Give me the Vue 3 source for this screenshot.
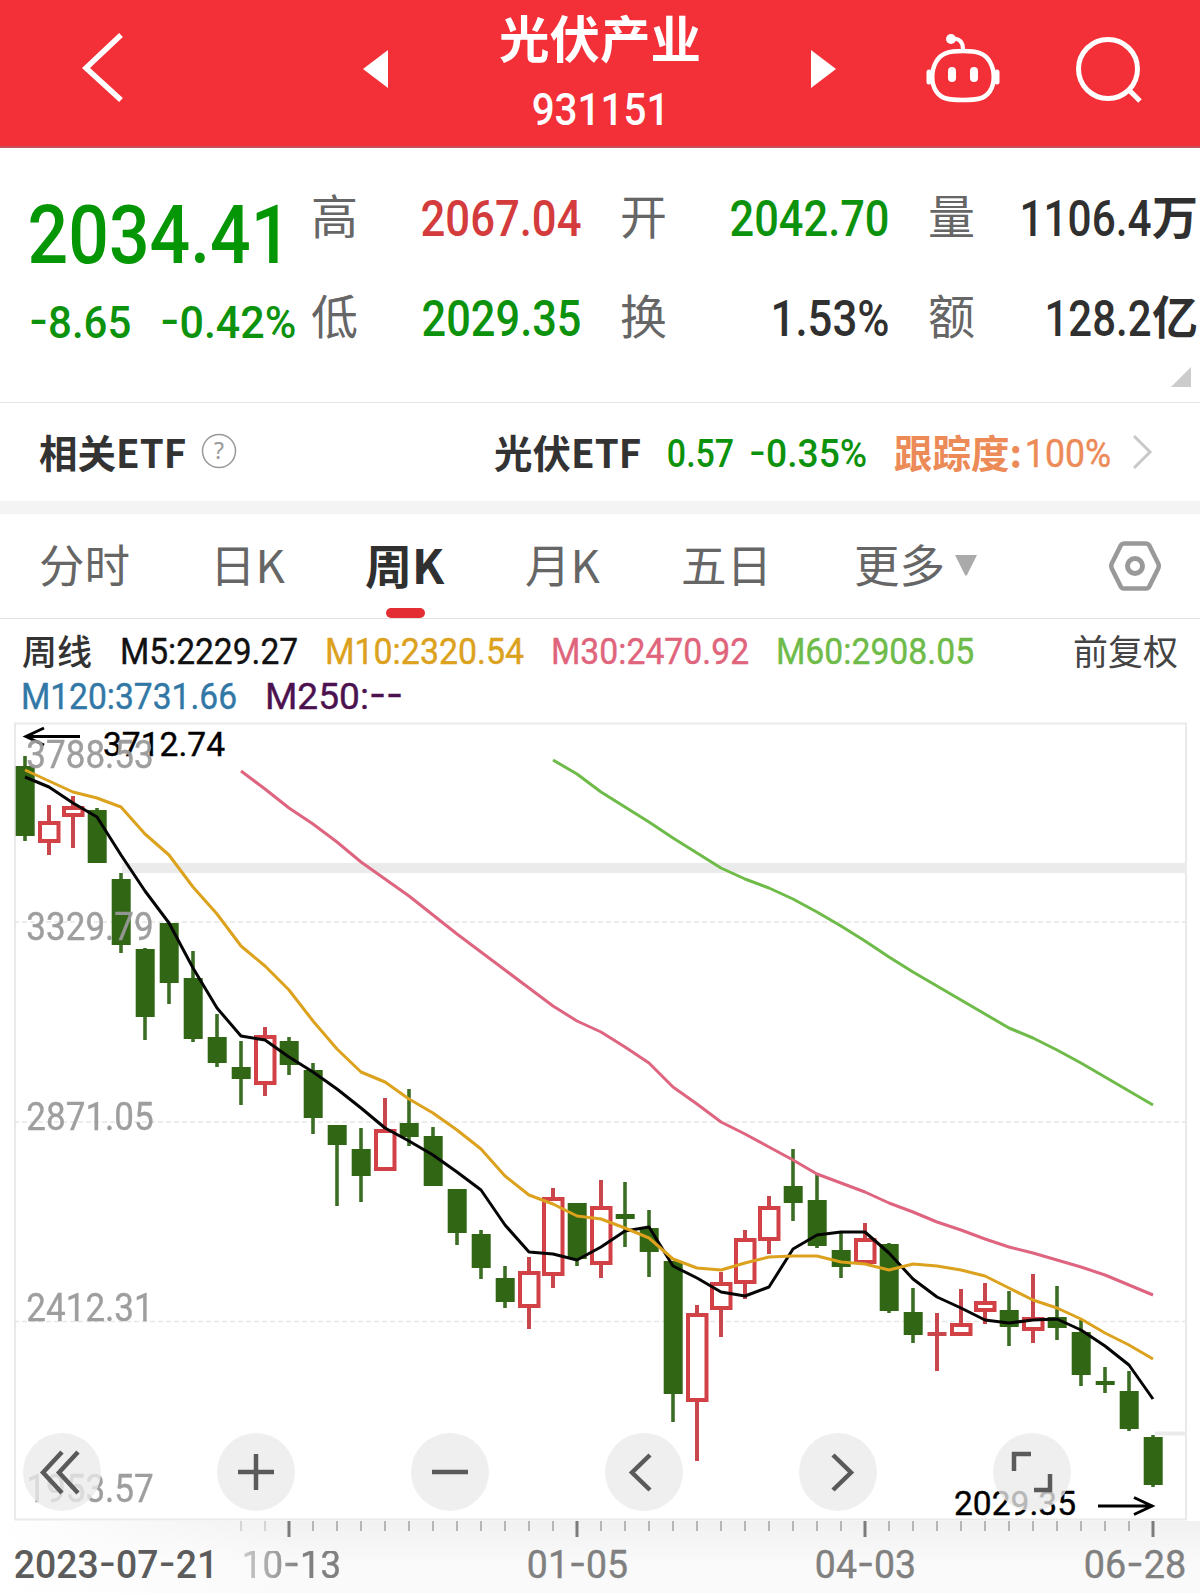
<template>
  <main class="page">
    <header class="top-bar">
      <svg class="back-icon" width="42" height="72" viewBox="0 0 42 72">
        <path d="M39 3 L4 36 L39 68" fill="none" stroke="#fff" stroke-width="5.500" />
      </svg>
      <svg class="prev-icon" width="26" height="38" viewBox="0 0 26 38">
        <path d="M25 0 V38 L0 19 Z" fill="#fff" />
      </svg>
      <div class="title-group">
        <h1 class="title">光伏产业</h1>
        <FitText text="931151" :w="135" :cap="32" class="code" />
      </div>
      <svg class="next-icon" width="26" height="38" viewBox="0 0 26 38">
        <path d="M0 0 V38 L25 19 Z" fill="#fff" />
      </svg>
      <svg class="robot-icon" width="78" height="72" viewBox="0 0 78 72">
        <g fill="none" stroke="#fff" stroke-width="4.500" stroke-linecap="round">
          <path d="M39 18 C53 18 61 20 66 29 C71 38 71 50 66 58 C61 66 53 67 39 67 C25 67 17 66 12 58 C7 50 7 38 12 29 C17 20 25 18 39 18 Z" />
          <path d="M29 6 C35 5 39 9 39 16" stroke-width="4" />
          <path d="M5 39 V49 M73 39 V49" stroke-width="5" />
          <path d="M28 38 V45 M50 38 V45" stroke-width="8" />
        </g>
        <circle cx="27" cy="6" r="5" fill="#fff" />
      </svg>
      <svg class="search-icon" width="70" height="68" viewBox="0 0 70 68">
        <circle cx="33" cy="33" r="29.500" fill="none" stroke="#fff" stroke-width="5" />
        <path d="M53 53 L65 65" stroke="#fff" stroke-width="5" />
      </svg>
    </header>

    <section class="quote">
      <div class="quote-main">
        <FitText text="2034.41" :w="259" :cap="58" class="price" />
        <div class="change-row">
          <FitText text="-8.65" :w="100" :cap="32" class="green" />
          <FitText text="-0.42%" :w="134" :cap="32" class="green" />
        </div>
      </div>
      <div class="quote-stats">
        <div v-for="s in stats" :key="s.label" class="stat">
          <span class="stat-label">{{ s.label }}</span>
          <span class="stat-value" :class="s.tone">
            <FitText :text="s.value" :w="s.w" :cap="35" />
            <b v-if="s.unit" class="stat-unit">{{ s.unit }}</b>
          </span>
        </div>
      </div>
      <svg class="corner" width="20" height="20" viewBox="0 0 20 20">
        <path d="M20 0 V20 H0 Z" fill="#ccc" />
      </svg>
    </section>

    <section class="etf-row">
      <span class="etf-label">相关ETF</span>
      <svg class="help-icon" width="36" height="36" viewBox="0 0 36 36">
        <circle cx="18" cy="18" r="16.500" fill="none" stroke="#999" stroke-width="1.500" />
        <text x="18" y="26" text-anchor="middle" font-size="23" fill="#999">?</text>
      </svg>
      <span class="etf-name">光伏ETF</span>
      <FitText text="0.57" :w="65" :cap="27" class="green etf-price" />
      <FitText text="-0.35%" :w="116" :cap="27" class="green etf-change" />
      <span class="etf-track">跟踪度:</span>
      <FitText text="100%" :w="84" :cap="27" class="etf-percent light" />
      <svg class="etf-arrow" width="22" height="36" viewBox="0 0 22 36">
        <path d="M2 2 L18 18 L2 34" fill="none" stroke="#c8c8c8" stroke-width="3" />
      </svg>
    </section>

    <nav class="tabs">
      <button v-for="tab in tabs" :key="tab" :class="['tab', { active: activeTab === tab }]" @click="activeTab = tab">
        {{ tab }}
        <svg v-if="tab === '更多'" class="more-icon" width="24" height="21" viewBox="0 0 24 21">
          <path d="M1 0 H23 L13 20 Q12 21 11 20 Z" fill="#aaa" />
        </svg>
      </button>
      <svg class="setting-icon" width="54" height="52" viewBox="0 0 54 52">
        <path d="M16 3.500 H38 Q40 3.500 41 5 L50 23 Q51.500 26 50 29 L41 47 Q40 48.500 38 48.500 H16 Q14 48.500 13 47 L4 29 Q2.500 26 4 23 L13 5 Q14 3.500 16 3.500 Z" fill="none" stroke="#999" stroke-width="4.500" />
        <circle cx="27" cy="26" r="7.500" fill="none" stroke="#999" stroke-width="5" />
      </svg>
    </nav>

    <section class="legend">
      <div class="legend-row">
        <span class="period">周线</span>
        <FitText v-for="m in averages" :key="m.text" :text="m.text" :w="m.w" :cap="26" class="light" :style="{ color: m.color }" />
        <span class="adjust">前复权</span>
      </div>
      <div class="legend-row second">
        <FitText text="M120:3731.66" :w="214" :cap="26" class="m120 light" />
        <FitText text="M250:--" :w="136" :cap="26" class="m250 light" />
      </div>
    </section>

    <section class="chart">
      <svg class="plot" width="1200" height="800" viewBox="0 722 1200 800">
        <rect x="15" y="723.500" width="1171" height="796" fill="none" stroke="#e9e9e9" stroke-width="2" />
        <path v-for="y in [922, 1122, 1321.5]" :key="y" :d="`M14 ${y} H1186`" stroke="#e6e6e6" stroke-width="1.500" stroke-dasharray="5 3" />
        <rect x="122" y="863" width="1065" height="10" fill="#ebebeb" />
        <rect x="1155" y="1431.500" width="32" height="4" fill="#ebebeb" />

        <g v-for="(c, i) in candles" :key="i">
          <template v-if="c[0]">
            <path :d="`M${cx(i)} ${c[1]} V${c[3]} M${cx(i)} ${c[4]} V${c[2]}`" stroke="#c9474c" stroke-width="4" />
            <rect v-if="c[4] - c[3] > 5" :x="cx(i) - 9" :y="c[3] + 2" width="18.500" :height="c[4] - c[3] - 4" fill="#fff" stroke="#d24146" stroke-width="4" />
            <rect v-else :x="cx(i) - 9.5" :y="c[3]" width="19" :height="c[4] - c[3]" fill="#c9474c" />
          </template>
          <template v-else>
            <path :d="`M${cx(i)} ${c[1]} V${c[2]}`" stroke="#3b6e24" stroke-width="3.600" />
            <rect :x="cx(i) - 9.3" :y="c[3]" width="19" :height="c[4] - c[3]" fill="#306614" />
          </template>
        </g>

        <polyline v-for="l in lines" :key="l.color" :points="points(l)" fill="none" :stroke="l.color" stroke-width="3" stroke-linejoin="round" />

        <g fill="none" stroke="#000" stroke-width="3">
          <path d="M26 736.500 H80 M44 728 L26 736.500 L44 745" />
          <path d="M1098 1506 H1153 M1134 1497.500 L1152 1506 L1134 1514.500" />
        </g>
        <FitText text="3712.74" :x="104" :y="732" :w="120" :cap="24" class="mark light" />
        <FitText text="2029.35" :x="955" :y="1491" :w="120" :cap="24" class="mark light" />
        <FitText v-for="s in scale" :key="s.text" :text="s.text" :x="27.500" :y="s.y" :w="125" :cap="27" class="scale light" />
      </svg>

      <div class="controls">
        <button v-for="(d, i) in controlIcons" :key="i" class="control">
          <svg width="78" height="78" viewBox="0 0 78 78">
            <path :d="d" fill="none" stroke="#5a5a5a" stroke-width="4.500" />
          </svg>
        </button>
      </div>
    </section>

    <footer class="axis">
      <svg class="ticks" width="1200" height="17" viewBox="0 0 1200 17">
        <path v-for="i in 39" :key="i" :d="`M${cx(i + 8)} 0 V${(i + 8) % 12 === 11 ? 16 : 10}`" stroke="#7b7b7b" :stroke-width="(i + 8) % 12 === 11 ? 3 : 1" :opacity="i < 3 ? 0.5 : 1" />
      </svg>
      <div class="dates">
        <FitText text="2023-07-21" :w="202" :cap="27" class="date" />
        <FitText text="10-13" :w="97" :cap="27" class="date light" />
        <FitText text="01-05" :w="99" :cap="27" class="date light" />
        <FitText text="04-03" :w="99" :cap="27" class="date light" />
        <FitText text="06-28" :w="100" :cap="27" class="date light" />
      </div>
    </footer>
  </main>
</template>

<script setup>
import { h, ref } from 'vue'

// Condensed figures: the text is stretched to the width w, cap is the digit height
const FitText = (props) => {
  const size = props.cap / 0.711
  const pad = size * 0.03
  const parts = props.text.split(/(-)/).filter(Boolean)
  return h('svg', { class: 'fit', width: props.w, height: props.cap }, [
    h(
      'text',
      {
        x: -pad,
        y: props.cap,
        'font-size': size,
        textLength: props.w + pad * 2,
        lengthAdjust: 'spacingAndGlyphs',
      },
      parts.map((p) => h('tspan', { class: p === '-' ? 'dash' : null }, p)),
    ),
  ])
}
FitText.props = ['text', 'w', 'cap']

const stats = [
  { label: '高', value: '2067.04', w: 158, tone: 'red' },
  { label: '开', value: '2042.70', w: 157, tone: 'green' },
  { label: '量', value: '1106.4', w: 129, unit: '万', tone: 'dark' },
  { label: '低', value: '2029.35', w: 157, tone: 'green' },
  { label: '换', value: '1.53%', w: 116, tone: 'dark' },
  { label: '额', value: '128.2', w: 104, unit: '亿', tone: 'dark' },
]

const tabs = ['分时', '日K', '周K', '月K', '五日', '更多']
const activeTab = ref('周K')

const averages = [
  { text: 'M5:2229.27', w: 176, color: '#111' },
  { text: 'M10:2320.54', w: 197, color: '#dca11d' },
  { text: 'M30:2470.92', w: 196, color: '#e0647b' },
  { text: 'M60:2908.05', w: 196, color: '#6fbb49' },
]

const scale = [
  { text: '3788.53', y: 741 },
  { text: '3329.79', y: 913 },
  { text: '2871.05', y: 1103 },
  { text: '2412.31', y: 1294 },
  { text: '1953.57', y: 1475 },
]

// [rising, high, low, body top, body bottom]
const candles = [
  [0, 756, 841, 766, 836], [1, 805, 855, 821, 843], [1, 796, 848, 806, 817], [0, 808, 863, 810, 863],
  [0, 873, 953, 879, 945], [0, 948, 1040, 949, 1017], [0, 923, 1004, 923, 983], [0, 951, 1042, 978, 1039],
  [0, 1014, 1067, 1037, 1063], [0, 1041, 1105, 1067, 1079], [1, 1027, 1096, 1035, 1085], [0, 1037, 1075, 1041, 1065],
  [0, 1063, 1134, 1070, 1118], [0, 1125, 1206, 1125, 1145], [0, 1128, 1202, 1149, 1176], [1, 1098, 1171, 1129, 1171],
  [0, 1089, 1146, 1123, 1137], [0, 1127, 1186, 1136, 1186], [0, 1189, 1245, 1189, 1233], [0, 1230, 1279, 1234, 1268],
  [0, 1266, 1308, 1278, 1302], [1, 1257, 1329, 1271, 1308], [1, 1188, 1288, 1197, 1276], [0, 1203, 1266, 1203, 1259],
  [1, 1180, 1278, 1206, 1265], [0, 1182, 1247, 1214, 1219], [0, 1210, 1277, 1228, 1252], [0, 1261, 1422, 1261, 1394],
  [1, 1305, 1461, 1313, 1402], [1, 1272, 1337, 1282, 1310], [1, 1230, 1299, 1238, 1284], [1, 1196, 1254, 1206, 1241],
  [0, 1149, 1221, 1186, 1203], [0, 1173, 1248, 1200, 1246], [0, 1233, 1278, 1250, 1267], [1, 1223, 1264, 1238, 1264],
  [0, 1243, 1313, 1244, 1311], [0, 1288, 1343, 1312, 1335], [1, 1313, 1371, 1332, 1336], [1, 1289, 1336, 1323, 1336],
  [1, 1283, 1324, 1301, 1312], [0, 1291, 1346, 1310, 1327], [1, 1274, 1343, 1317, 1331], [0, 1286, 1340, 1317, 1328],
  [0, 1320, 1386, 1332, 1375], [0, 1367, 1393, 1381, 1385], [0, 1371, 1431, 1391, 1429], [0, 1435, 1487, 1437, 1485],
]

const lines = [
  {
    color: '#6fbb49',
    start: 22,
    ys: [760, 774, 792, 807, 822, 838, 853, 868, 879, 888, 899, 912, 926, 941, 957, 972, 986, 1000, 1014, 1028, 1038, 1050, 1063, 1077, 1091, 1105],
  },
  {
    color: '#de6480',
    start: 9,
    ys: [771, 789, 808, 824, 842, 862, 879, 896, 915, 934, 952, 970, 988, 1006, 1021, 1032, 1047, 1063, 1087, 1104, 1122, 1134, 1147, 1160, 1174, 1183, 1192, 1203, 1212, 1222, 1230, 1239, 1247, 1253, 1260, 1267, 1275, 1285, 1295],
  },
  {
    color: '#050505',
    start: 0,
    ys: [777, 787, 803, 817, 855, 891, 923, 968, 1008, 1036, 1040, 1057, 1072, 1089, 1108, 1128, 1141, 1155, 1172, 1190, 1225, 1252, 1254, 1260, 1247, 1231, 1227, 1266, 1278, 1292, 1296, 1287, 1249, 1235, 1232, 1232, 1253, 1279, 1297, 1308, 1320, 1323, 1320, 1319, 1330, 1346, 1365, 1399],
  },
  {
    color: '#dca11d',
    start: 0,
    ys: [770, 781, 792, 798, 807, 834, 855, 887, 914, 946, 966, 990, 1021, 1049, 1072, 1082, 1099, 1113, 1130, 1149, 1176, 1195, 1204, 1216, 1219, 1228, 1238, 1259, 1268, 1270, 1263, 1257, 1256, 1256, 1262, 1264, 1270, 1264, 1266, 1270, 1276, 1288, 1300, 1308, 1319, 1333, 1345, 1359],
  },
]

const cx = (i) => 25 + i * 24
const points = (l) => l.ys.map((y, i) => `${cx(l.start + i)},${y}`).join(' ')

const controlIcons = [
  'M39 19 L20 39.500 L39 60 M55 19 L36 39.500 L55 60',
  'M21 39 H57 M39 21 V57',
  'M21 39 H57',
  'M45 22 L27 39.500 L45 57',
  'M34 22 L52 39.500 L34 57',
  'M21 38 V21 H38 M41 57 H57 V41',
]
</script>

<style>
body {
  background: #fff;
}

.fit {
  display: block;
  flex-shrink: 0;
  overflow: visible;
}

.fit text {
  font-family: Roboto, 'Liberation Sans', sans-serif;
  font-weight: 500;
  fill: currentColor;
}

.fit.light text {
  font-weight: 400;
  stroke: currentColor;
  stroke-width: 0.4px;
}

.fit .dash {
  font-family: Inter, Roboto, sans-serif;
  font-feature-settings: 'case';
}
</style>

<style scoped>
.page {
  width: 1200px;
  height: 1593px;
  overflow: hidden;
  background: #fff;
  color: #333;
  font-family: 'Noto Sans CJK SC', 'Noto Sans', sans-serif;
}

button {
  border: none;
  background: none;
  padding: 0;
  font-family: inherit;
  cursor: pointer;
}

svg {
  display: block;
  flex-shrink: 0;
}

.green {
  color: #0c920c;
}

.red {
  color: #d43b3d;
}

.dark {
  color: #303030;
}

.top-bar {
  display: flex;
  align-items: flex-start;
  box-sizing: border-box;
  height: 148px;
  background: #f32f38;
  border-bottom: 2px solid #c4505a;
  color: #fff;
}

.back-icon {
  margin: 32px 0 0 82px;
}

.prev-icon {
  margin: 50px 0 0 239px;
}

.title-group {
  width: 202px;
  margin: 11px 0 0 110px;
}

.title {
  margin: 0;
  font-size: 50.5px;
  line-height: 50px;
  font-weight: 700;
}

.code {
  margin: 32px 0 0 34px;
}

.next-icon {
  margin: 50px 0 0 110px;
}

.robot-icon {
  margin: 33px 0 0 87px;
}

.search-icon {
  margin: 36px 0 0 73px;
}

.quote {
  position: relative;
  display: flex;
  box-sizing: border-box;
  height: 255px;
  border-bottom: 1px solid #e4e4e4;
}

.quote-main {
  width: 281px;
  padding: 57px 0 0 30px;
}

.price {
  color: #059605;
}

.change-row {
  display: flex;
  gap: 31px;
  margin-top: 43px;
}

.quote-stats {
  display: grid;
  grid-template-columns: 269px 268px 270px;
  grid-template-rows: 100px 100px;
  column-gap: 40px;
  height: 200px;
  margin-top: 20px;
}

.stat {
  display: flex;
  justify-content: space-between;
  align-items: center;
}

.stat-label {
  padding-bottom: 10px;
  color: #666;
  font-size: 47px;
  line-height: 47px;
}

.stat-value {
  display: flex;
  align-items: center;
}

.stat-unit {
  margin-left: 2px;
  padding-bottom: 8px;
  font-size: 46px;
  line-height: 46px;
  font-weight: 700;
}

.corner {
  position: absolute;
  right: 9px;
  bottom: 15px;
}

.etf-row {
  display: flex;
  align-items: center;
  box-sizing: border-box;
  height: 111px;
  padding: 0 0 0 39px;
  border-bottom: 13px solid #f4f4f4;
  white-space: nowrap;
}

.etf-label,
.etf-name,
.etf-track {
  font-size: 38.5px;
  line-height: 40px;
  font-weight: 700;
  padding-bottom: 3px;
}

.etf-label {
  width: 162px;
}

.help-icon {
  margin-top: -2px;
  font-family: 'Noto Sans', sans-serif;
}

.etf-name {
  width: 174px;
  margin-left: 257px;
}

.etf-price,
.etf-change,
.etf-percent {
  margin-top: 2px;
}

.etf-change {
  margin-left: 17px;
}

.etf-track {
  width: 132px;
  margin-left: 28px;
}

.etf-track,
.etf-percent {
  color: #ec8a58;
}

.etf-arrow {
  margin-left: 22px;
}

.tabs {
  display: grid;
  grid-template-columns: 171px 155px 160px 156px 173px 253px 54px;
  align-items: center;
  box-sizing: border-box;
  height: 105px;
  padding-left: 39px;
  border-bottom: 1px solid #e0e0e0;
}

.setting-icon {
  margin-left: 1px;
}

.tab {
  position: relative;
  display: flex;
  align-items: center;
  height: 104px;
  padding-bottom: 6px;
  box-sizing: border-box;
  color: #666;
  font-size: 45.5px;
  line-height: 45px;
}

.tab.active {
  color: #303030;
  font-size: 47px;
  font-weight: 700;
}

.tab.active::after {
  content: '';
  position: absolute;
  left: 21px;
  bottom: 0;
  width: 39px;
  height: 10px;
  border-radius: 5px;
  background: #e32e33;
}

.more-icon {
  margin: 4px 0 0 9px;
}

.legend {
  height: 103px;
  padding-left: 22px;
}

.legend-row {
  display: flex;
  align-items: center;
  gap: 29px;
  height: 26px;
  padding-top: 19px;
}

.legend-row.second {
  gap: 30px;
}

.period,
.adjust {
  font-size: 35px;
  line-height: 35px;
  padding-bottom: 4px;
}

.period {
  font-weight: 500;
}

.adjust {
  margin-left: 71px;
  color: #444;
}

.m120 {
  color: #3278a6;
}

.m250 {
  color: #4c124f;
}

.chart {
  position: relative;
  height: 799px;
}

.mark {
  color: #000;
}

.scale {
  color: #999;
  opacity: 0.95;
}

.controls {
  position: absolute;
  left: 23px;
  bottom: 10px;
  display: flex;
  gap: 116px;
}

.control {
  width: 78px;
  height: 78px;
  border-radius: 50%;
  background: rgba(235, 235, 235, 0.78);
}

.axis {
  height: 73px;
  background: linear-gradient(90deg, #fff 0, rgba(255, 255, 255, 0) 300px), linear-gradient(#f1f1f1, #fafafa 60%);
}

.dates {
  display: flex;
  padding: 13px 14px 0 15px;
}

.date {
  color: #808080;
}

.date:nth-child(1) {
  color: #5c5c5c;
  margin-right: 26px;
}

.date:nth-child(2) {
  margin-right: 188px;
  -webkit-mask-image: linear-gradient(90deg, rgba(0, 0, 0, 0.4), #000 60%);
  mask-image: linear-gradient(90deg, rgba(0, 0, 0, 0.4), #000 60%);
}

.date:nth-child(3) {
  margin-right: 189px;
}

.date:nth-child(4) {
  margin-right: 170px;
}
</style>
